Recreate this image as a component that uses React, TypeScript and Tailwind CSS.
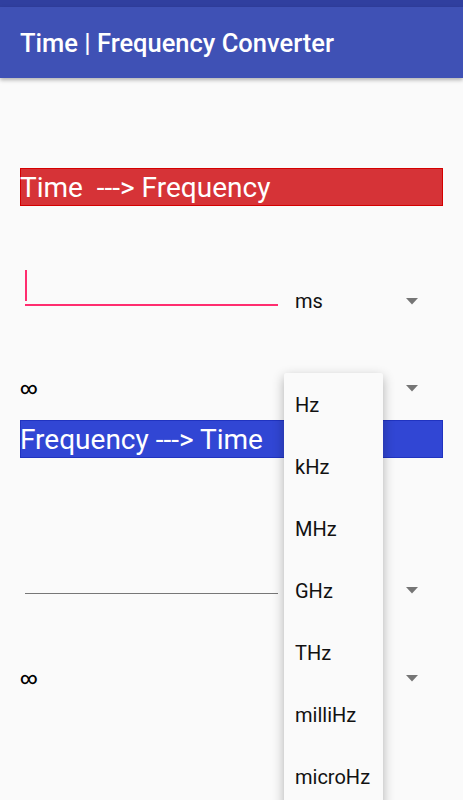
import React from "react";

const Caret = () => (
  <svg width="12" height="7" viewBox="0 0 12 7" className="block">
    <path d="M0 0 L12 0 L6 6.5 Z" fill="#757575" />
  </svg>
);

export default function App() {
  const items = ["Hz", "kHz", "MHz", "GHz", "THz", "milliHz", "microHz"];
  return (
    <div
      className="relative w-[463px] h-[800px] overflow-hidden bg-[#fafafa]"
      style={{ fontFamily: "Roboto, 'Noto Sans', sans-serif" }}
    >
      <div className="h-[7px] bg-[#303f9f]" />
      <div className="relative z-10 h-[71px] bg-[#3f51b5] flex items-center px-5 shadow-[0_2px_4px_rgba(0,0,0,0.3)]">
        <span className="text-white text-[25.5px] leading-none font-medium mt-[2px]">
          Time | Frequency Converter
        </span>
      </div>

      <div className="px-5 flex flex-col">
        <div className="mt-[90px] h-[38px] bg-[#d63337] border border-[#d50000] flex items-center">
          <span className="text-white text-[28px] leading-none whitespace-pre ml-[-1px] mt-[2px]">
            Time  ---&gt; Frequency
          </span>
        </div>

        <div className="mt-[64px] h-[36px] flex items-end">
          <div className="relative w-[253px] h-full ml-[5px] border-b-2 border-[#ff2d6f]">
            <div className="absolute left-0 top-0 w-[2px] h-[31px] bg-[#ff2d6f]" />
          </div>
          <div className="flex-1 flex items-center justify-between h-full pl-[17px] pr-[25px] pt-[26px]">
            <span className="text-[20px] text-[#111]">ms</span>
            <Caret />
          </div>
        </div>

        <div className="mt-[70px] h-[24px] flex items-center justify-between pr-[25px]">
          <span className="text-[17px] font-medium text-black leading-none">∞</span>
          <Caret />
        </div>

        <div className="mt-[20px] h-[38px] bg-[#3146d4] border border-[#2033c0] flex items-center">
          <span className="text-white text-[28px] leading-none whitespace-pre ml-[-1px] mt-[2px]">
            Frequency ---&gt; Time
          </span>
        </div>

        <div className="mt-[100px] h-[36px] flex items-end">
          <div className="w-[253px] h-full ml-[5px] border-b border-[#777]" />
          <div className="flex-1 flex items-center justify-end h-full pr-[25px] pt-[28px]">
            <Caret />
          </div>
        </div>

        <div className="mt-[72px] h-[24px] flex items-center justify-between pr-[25px]">
          <span className="text-[17px] font-medium text-black leading-none">∞</span>
          <Caret />
        </div>
      </div>

      <div className="absolute left-[284px] top-[373px] w-[99px] h-[440px] bg-[#fafafa] rounded-[2px] shadow-[0_4px_12px_rgba(0,0,0,0.3)] flex flex-col pt-[1px]">
        {items.map((it) => (
          <div key={it} className="h-[62px] flex items-center pl-[11px] text-[20px] text-[#111]">
            {it}
          </div>
        ))}
      </div>
    </div>
  );
}
